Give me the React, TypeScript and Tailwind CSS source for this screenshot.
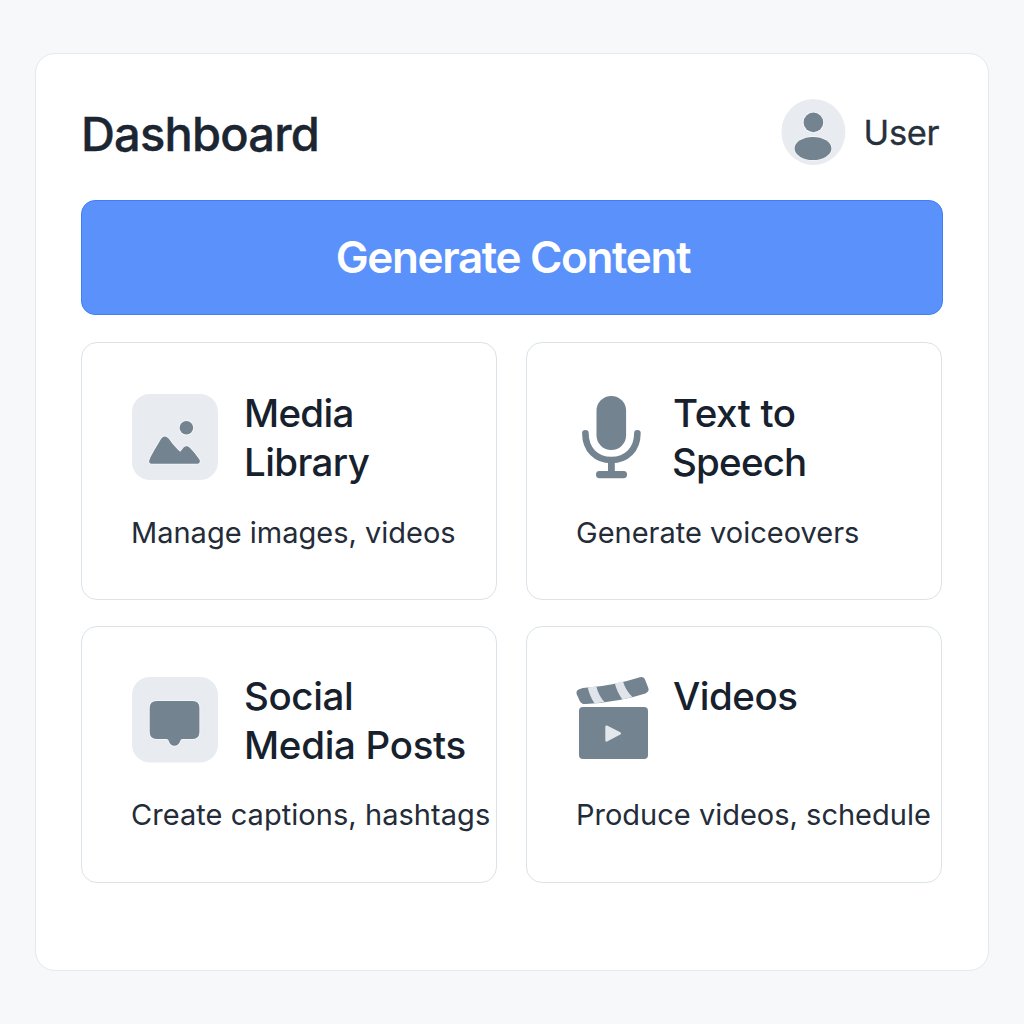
import type { ReactNode } from "react";

function ImageIcon() {
  return (
    <svg width="86" height="86" viewBox="0 0 86 86" className="block">
      <rect width="86" height="86" rx="18" fill="#e8ecf0" />
      <g fill="#748390" stroke="#f6f8fa" strokeWidth="1.6" paintOrder="stroke">
        <circle cx="54.4" cy="33.8" r="6.8" />
        <path d="M17.6 65.4 C19.5 61 24.5 52.5 28.7 45.6 C30.8 41.6 34.4 41.6 37 45 C41 50.5 44.5 54.8 48.2 57.8 L51.4 53.8 C53.4 51.7 56 51.8 58 54 C61.5 57.5 64.6 61.5 67.2 65.2 C68.8 67.8 67.4 69.8 64.8 69.8 H20.4 C17.6 69.8 16.4 68 17.6 65.4 Z" />
      </g>
    </svg>
  );
}

function BubbleIcon() {
  return (
    <svg width="86" height="86" viewBox="0 0 86 86" className="block">
      <rect width="86" height="85.5" rx="18" fill="#e8ecf0" />
      <path
        d="M24.7 24 H60.7 Q67.4 24 67.4 31 V55 Q67.4 62 60.7 62 H50.5 Q48.6 62 48.2 64 Q46.6 68.8 42.4 68.8 Q38.2 68.8 36.8 64 Q36.4 62 34.5 62 H24.7 Q17.7 62 17.7 55 V31 Q17.7 24 24.7 24 Z"
        fill="#748390"
        stroke="#f6f8fa"
        strokeWidth="1.6"
        paintOrder="stroke"
      />
    </svg>
  );
}

function MicIcon() {
  return (
    <svg width="72" height="86" viewBox="0 0 72 86" className="block">
      <rect x="20.5" y="2" width="29.6" height="54" rx="14.8" fill="#748390" />
      <path
        d="M9.4 39.2 C9.4 55.5 20 66 35.3 66 C50.6 66 61.4 55.5 61.4 39.2"
        fill="none"
        stroke="#748390"
        strokeWidth="6.6"
        strokeLinecap="round"
      />
      <path d="M32 67 H38.8 V78 H32 Z" fill="#748390" />
      <rect x="20" y="77" width="31" height="7.2" rx="3.4" fill="#748390" />
    </svg>
  );
}

function ClapperIcon() {
  return (
    <svg width="76" height="86" viewBox="0 0 76 86" className="block">
      <path
        d="M2.6 12.4 Q7 10.4 12.5 10.6 Q40 7.8 63 0.4 Q67.8 -1 69.4 3.4 L72.4 11.2 Q73.4 15 69.4 16.4 Q44 24.8 9.6 27 Q5.2 27.3 3.5 23.4 L0.7 17.2 Q-0.3 13.8 2.6 12.4 Z"
        fill="#748390"
      />
      <path d="M11.7 10.6 L20.3 9.2 Q22.5 18.5 28.5 25 L18.6 26.6 Q14 20 11.7 10.6 Z" fill="#dfe5ea" />
      <path d="M38.8 6.4 L46.9 4.2 Q50 14 56.5 20 L46.4 22.4 Q41.5 16 38.8 6.4 Z" fill="#dfe5ea" />
      <rect x="3" y="30" width="69" height="52" rx="4" fill="#748390" />
      <path
        d="M30.5 49.6 L43.8 56.4 L30.5 63.4 Z"
        fill="#e3e8ed"
        stroke="#e3e8ed"
        strokeWidth="2.4"
        strokeLinejoin="round"
      />
    </svg>
  );
}

type CardProps = {
  icon: ReactNode;
  title: ReactNode;
  text: string;
  className: string;
  textClass: string;
};

function Card({ icon, title, text, className, textClass }: CardProps) {
  return (
    <section className={"rounded-[16px] border-[1.5px] border-[#dbe3e8] pl-[49px] " + className}>
      <div className="flex h-[98px] items-start">
        {icon}
        <h2 className="-mt-[5px] whitespace-nowrap text-[38.5px] font-medium leading-[49px] text-[#17212d]">
          {title}
        </h2>
      </div>
      <p
        className={
          "whitespace-nowrap text-[29px] font-normal leading-[38px] text-[#232c38] " + textClass
        }
      >
        {text}
      </p>
    </section>
  );
}

export default function App() {
  return (
    <div className="h-[1024px] w-[1024px] bg-[#f6f8fa] pl-[35px] pt-[53px] font-['Inter',sans-serif]">
      <main className="h-[918px] w-[954px] rounded-[20px] border-[1.5px] border-[#e4e9ef] bg-white px-[45px] pt-[44px]">
        <header className="flex h-[67px] items-center justify-between">
          <h1 className="pt-[4px] text-[47px] font-medium leading-[60px] tracking-[-0.8px] text-[#1b2632] [-webkit-text-stroke:0.4px_#1b2632]">
            Dashboard
          </h1>
          <div className="flex items-center gap-[18px] pr-[4px]">
            <svg width="65" height="66" viewBox="0 0 65 66">
              <ellipse cx="32.4" cy="33" rx="32" ry="33" fill="#e8ecf0" />
              <g fill="#748390" stroke="#f6f8fa" strokeWidth="1.6" paintOrder="stroke">
                <circle cx="32.4" cy="23.4" r="9.8" />
                <ellipse cx="32" cy="49.5" rx="18.4" ry="11.5" />
              </g>
            </svg>
            <span className="pt-[2px] text-[34.5px] font-normal leading-[44px] tracking-[-0.4px] text-[#27313c] [-webkit-text-stroke:0.3px_#27313c]">
              User
            </span>
          </div>
        </header>
        <button className="mt-[35px] flex h-[115px] w-[862px] items-center justify-center rounded-[14px] border border-[#3f7ffa] bg-[#5b91fb] pb-[2px] pl-[2px] text-[44px] font-semibold tracking-[-1.35px] text-white">
          Generate Content
        </button>
        <div className="mt-[27px] grid w-[862px] grid-cols-[416px_416px] gap-x-[29px] gap-y-[26px]">
          <Card
            className="h-[258px] pt-[51px]"
            icon={<span className="ml-px mr-[26px] shrink-0"><ImageIcon /></span>}
            title={
              <>
                <span className="block tracking-[-0.7px]">Media</span>
                <span className="block tracking-[-0.6px]">Library</span>
              </>
            }
            text="Manage images, videos"
            textClass="mt-[22px]"
          />
          <Card
            className="h-[258px] pt-[51px]"
            icon={<span className="mr-[25px] shrink-0"><MicIcon /></span>}
            title={
              <>
                <span className="block tracking-[-0.4px]">Text to</span>
                <span className="-ml-px block tracking-[-0.8px]">Speech</span>
              </>
            }
            text="Generate voiceovers"
            textClass="mt-[22px]"
          />
          <Card
            className="h-[257px] pt-[50px]"
            icon={<span className="ml-px mr-[26px] shrink-0"><BubbleIcon /></span>}
            title={
              <>
                <span className="block tracking-[-0.4px]">Social</span>
                <span className="block tracking-[-0.3px]">Media Posts</span>
              </>
            }
            text="Create captions, hashtags"
            textClass="mt-[21px] tracking-[0.05px]"
          />
          <Card
            className="h-[257px] pt-[50px]"
            icon={<span className="mr-[21px] shrink-0"><ClapperIcon /></span>}
            title={<span className="block tracking-[-0.5px]">Videos</span>}
            text="Produce videos, schedule"
            textClass="mt-[21px]"
          />
        </div>
      </main>
    </div>
  );
}
